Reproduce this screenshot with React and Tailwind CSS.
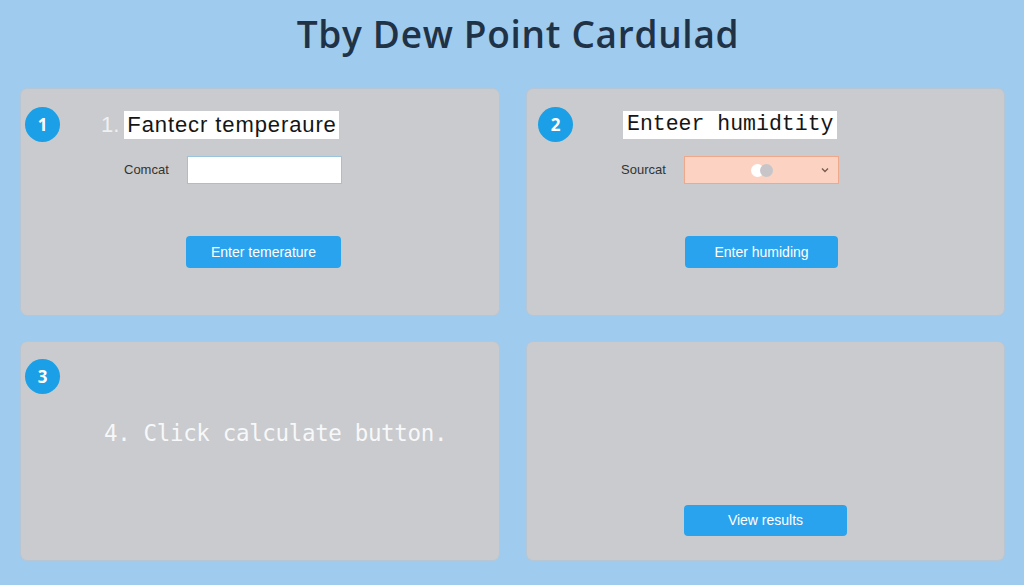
import React from "react";

function Badge({ n }) {
  return (
    <div className="flex h-[35px] w-[35px] shrink-0 items-center justify-center rounded-full bg-[#1b9fe6] text-[17px] font-bold text-white [font-family:'Open_Sans',sans-serif]">
      {n}
    </div>
  );
}

function Button({ children, className = "" }) {
  return (
    <button
      className={
        "flex items-center justify-center rounded-[4px] bg-[#2aa3ee] text-[14px] text-white [font-family:'Liberation_Sans',sans-serif] " +
        className
      }
    >
      {children}
    </button>
  );
}

const card =
  "flex flex-col rounded-[7px] border border-[#b7c6d4] bg-[#c9cbce]";

export default function App() {
  return (
    <div className="flex h-[585px] w-[1024px] flex-col bg-[#9fcbee]">
      <header className="flex h-[88px] items-start justify-center pl-[12px] pt-[6px]">
        <h1 className="text-[37px] font-semibold tracking-[0.7px] text-[#1f3246] [font-family:'Open_Sans',sans-serif]">
          Tby Dew Point Cardulad
        </h1>
      </header>

      <main className="grid grid-cols-[480px_479px] grid-rows-[228px_220px] gap-x-[26px] gap-y-[25px] pl-[20px]">
        {/* Step 1: temperature */}
        <section className={card}>
          <div className="mt-[18px] flex items-center">
            <div className="ml-[4px]">
              <Badge n="1" />
            </div>
            <span className="ml-[41px] text-[22px] text-[#eef0f2] [font-family:'Liberation_Sans',sans-serif]">
              1.
            </span>
            <span className="ml-[5px] flex h-[28px] items-center bg-white pl-[3px] pr-[2px] text-[22px] tracking-[0.9px] text-[#151515] [font-family:'Liberation_Sans',sans-serif]">
              Fantecr temperaure
            </span>
          </div>
          <div className="mt-[14px] flex items-center">
            <span className="ml-[103px] w-[63px] text-[13px] text-[#333] [font-family:'Liberation_Sans',sans-serif]">
              Comcat
            </span>
            <input className="h-[28px] w-[155px] border border-[#9cc3dc] bg-white" />
          </div>
          <Button className="ml-[165px] mt-[52px] h-[32px] w-[155px]">
            Enter temerature
          </Button>
        </section>

        {/* Step 2: humidity */}
        <section className={card}>
          <div className="mt-[18px] flex items-center">
            <div className="ml-[11px]">
              <Badge n="2" />
            </div>
            <span className="ml-[50px] flex h-[28px] items-center bg-white px-[4px] text-[21.5px] text-[#151515] [font-family:'Liberation_Mono',monospace]">
              Enteer humidtity
            </span>
          </div>
          <div className="mt-[14px] flex items-center">
            <span className="ml-[94px] w-[63px] text-[13px] text-[#333] [font-family:'Liberation_Sans',sans-serif]">
              Sourcat
            </span>
            <div className="flex h-[28px] w-[155px] items-center border border-[#eea98c] bg-[#fcd3c3] pr-[8px]">
              <div className="ml-[66px] flex items-center">
                <span className="h-[13px] w-[13px] rounded-full bg-white" />
                <span className="-ml-[4px] h-[13px] w-[13px] rounded-full bg-[#c7c5c8]" />
              </div>
              <svg
                className="ml-auto"
                width="10"
                height="10"
                viewBox="0 0 10 10"
                fill="none"
                stroke="#7a5a50"
                strokeWidth="1.4"
              >
                <path d="M2 3.5 L5 6.5 L8 3.5" />
              </svg>
            </div>
          </div>
          <Button className="ml-[158px] mt-[52px] h-[32px] w-[153px]">
            Enter humiding
          </Button>
        </section>

        {/* Step 3: calculate */}
        <section className={card}>
          <div className="ml-[4px] mt-[17px]">
            <Badge n="3" />
          </div>
          <p className="ml-[83px] mt-[23px] text-[22.5px] tracking-[-0.35px] text-[#f7f8f9] [font-family:'DejaVu_Sans_Mono',monospace]">
            4. Click calculate button.
          </p>
        </section>

        {/* Step 4: results */}
        <section className={card}>
          <Button className="ml-[157px] mt-[163px] h-[31px] w-[163px]">
            View results
          </Button>
        </section>
      </main>
    </div>
  );
}
